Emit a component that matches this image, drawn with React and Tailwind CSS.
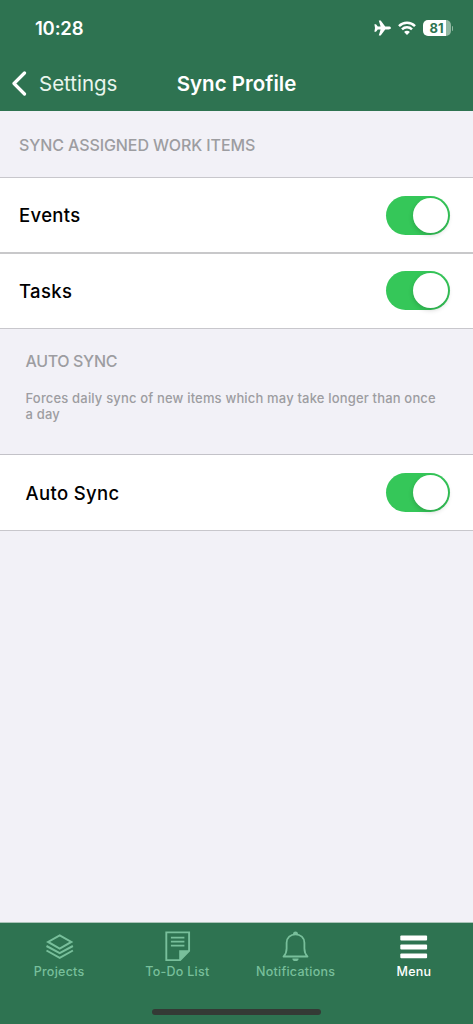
import React, { useState } from "react";

function StatusBar() {
  return (
    <div className="flex h-14 items-center justify-between pl-[35px] pr-5 text-white">
      <span className="text-[18.5px] leading-6 font-semibold tracking-[-0.2px]">10:28</span>
      <div className="flex items-center">
        <svg width="17" height="16" viewBox="0 0 17 16" fill="currentColor" aria-label="Airplane mode">
          <path d="M16.9 8c0 1-1.1 1.4-2.2 1.4h-3.5L6.7 15.5H4.8l1.8-6.1H3.8L2 11.7H.4L1 8 .4 4.3H2l1.8 2.3h2.8L4.8.5h1.9l4.5 6.1h3.5c1.1 0 2.2.4 2.2 1.4z" />
        </svg>
        <svg className="ml-[7px]" width="18" height="14" viewBox="0 0 18 14" fill="none" stroke="currentColor" strokeWidth="2.5" aria-label="Wi-Fi">
          <path d="M1 5.1a11.3 11.3 0 0 1 16 0" />
          <path d="M4 8.4a7.1 7.1 0 0 1 10 0" />
          <path d="M6.1 10.9a4 4 0 0 1 5.8 0L9 13.9z" fill="currentColor" stroke="none" />
        </svg>
        <div className="ml-[7px] flex h-4 w-7 items-center justify-center rounded-[5px] bg-linear-to-r from-white from-81% to-[#91b7a1] to-81% pt-px text-[13px] leading-none font-bold text-[#2e7351]">
          81
        </div>
        <span className="ml-px h-[5px] w-[1.5px] rounded-r-full bg-[#91b7a1]" />
      </div>
    </div>
  );
}

function NavBar() {
  return (
    <div className="grid h-[55px] grid-cols-[1fr_auto_1fr] items-center text-white">
      <button className="flex items-center pl-3 text-left">
        <svg width="15" height="25" viewBox="0 0 15 25" fill="none" stroke="currentColor" strokeWidth="3.2" strokeLinecap="round" strokeLinejoin="round">
          <path d="M12.5 2 2 12.5 12.5 23" />
        </svg>
        <span className="ml-3 text-[20.5px] leading-6 tracking-[-0.02px] text-[#e9f5ed]">Settings</span>
      </button>
      <h1 className="text-[20.5px] leading-6 font-semibold tracking-[0.02px]">Sync Profile</h1>
    </div>
  );
}

function Toggle({ label, checked, onChange }) {
  return (
    <button
      role="switch"
      aria-checked={checked}
      aria-label={label}
      onClick={() => onChange(!checked)}
      className={`flex h-[39px] w-16 items-center rounded-full p-0.5 ${
        checked ? "justify-end bg-[#35c759]" : "justify-start bg-[#e9e9ea]"
      }`}
    >
      <span className="size-[35px] rounded-full bg-white shadow-[0_2px_5px_rgba(0,0,0,0.18)]" />
    </button>
  );
}

function Row({ label, checked, onChange, className }) {
  return (
    <div className={`flex items-center justify-between bg-white pr-[23px] ${className}`}>
      <span className="text-[18.5px] leading-6 font-medium tracking-[0.35px] text-black">{label}</span>
      <Toggle label={label} checked={checked} onChange={onChange} />
    </div>
  );
}

function ProjectsIcon() {
  return (
    <svg width="30" height="30" viewBox="0 0 30 30" fill="none" stroke="currentColor" strokeWidth="2">
      <path d="M15.7 4.3 27.3 10.9 15.7 17.5 4.1 10.9z" />
      <path d="M2.5 15 15.7 22.2l13.2-7.2" />
      <path d="M2.5 19.5 15.7 26.9l13.2-7.4" />
    </svg>
  );
}

function TodoIcon() {
  return (
    <svg width="30" height="30" viewBox="0 0 30 30" fill="none" stroke="currentColor" strokeWidth="1.9">
      <path d="M4.3 1.4h22.8v18.4l-9 9.3H4.3z" />
      <path d="M17.2 19.2h10.4L17.2 29.8z" fill="currentColor" stroke="none" />
      <path d="M8.9 6.6h13.5M8.9 10.6h13.5M8.9 14.6h13.5" strokeWidth="1.6" />
    </svg>
  );
}

function BellIcon() {
  return (
    <svg width="30" height="30" viewBox="0 0 30 30" fill="none" stroke="currentColor" strokeWidth="1.8" strokeLinejoin="round">
      <path d="M14.5 3.3c-5 0-8.9 3.6-8.9 8.5v5.6c0 4.2-.8 5.6-3.1 8.1h24c-2.3-2.5-3.1-3.9-3.1-8.1v-5.6c0-4.9-3.9-8.5-8.9-8.5z" />
      <path d="M12 3.4a2.5 2.8 0 0 1 5 0zM11.4 27.4h6.2a3.1 2.6 0 0 1-6.2 0z" fill="currentColor" stroke="none" />
    </svg>
  );
}

function MenuIcon() {
  return (
    <svg width="30" height="30" viewBox="0 0 30 30" fill="currentColor">
      <rect x="1.3" y="4.6" width="26.8" height="5" rx="1" />
      <rect x="1.3" y="13.6" width="26.8" height="5" rx="1" />
      <rect x="1.3" y="22.6" width="26.8" height="4.6" rx="1" />
    </svg>
  );
}

const tabs = [
  { name: "Projects", Icon: ProjectsIcon },
  { name: "To-Do List", Icon: TodoIcon },
  { name: "Notifications", Icon: BellIcon },
  { name: "Menu", Icon: MenuIcon },
];

function TabBar({ active }) {
  return (
    <nav className="flex h-[102px] flex-col items-center border-t border-[#abc4b9] bg-[#2e7351]">
      <div className="grid w-full grid-cols-4 pt-2">
        {tabs.map(({ name, Icon }) => (
          <button
            key={name}
            className={`flex flex-col items-center ${name === active ? "text-white" : "text-[#78bf9b]"}`}
          >
            <Icon />
            <span className="mt-[3px] text-[12.5px] leading-4 font-medium tracking-[0.25px]">{name}</span>
          </button>
        ))}
      </div>
      <div className="mt-auto mb-[9px] h-1.5 w-[169px] rounded-full bg-[#343a35]" />
    </nav>
  );
}

export default function App() {
  const [events, setEvents] = useState(true);
  const [tasks, setTasks] = useState(true);
  const [autoSync, setAutoSync] = useState(true);

  return (
    <div className="flex h-screen flex-col bg-[#f2f1f7] font-[Inter,sans-serif]">
      <header className="h-[111px] shrink-0 bg-[#2e7351]">
        <StatusBar />
        <NavBar />
      </header>

      <main className="flex-1">
        <div className="flex h-[67px] items-center border-b border-[#c8c7cc] pt-0.5 pl-[19px]">
          <h2 className="text-base font-medium tracking-[-0.1px] text-[#9d9da1]">SYNC ASSIGNED WORK ITEMS</h2>
        </div>
        <Row label="Events" checked={events} onChange={setEvents} className="h-[76px] border-b-2 border-[#c8c8ca] pl-[19px]" />
        <Row label="Tasks" checked={tasks} onChange={setTasks} className="h-[75px] border-b border-[#c8c7cc] pb-px pl-[19px]" />

        <div className="h-[126px] border-b border-[#c3c2c8] pt-5 pl-[25.5px] text-[#9d9da1]">
          <h2 className="text-base font-medium tracking-[-0.35px]">AUTO SYNC</h2>
          <p className="mt-[17px] w-[420px] text-[13px] leading-4 font-medium tracking-[0.17px]">
            Forces daily sync of new items which may take longer than once a day
          </p>
        </div>
        <Row label="Auto Sync" checked={autoSync} onChange={setAutoSync} className="h-[76px] border-b border-[#c8c7cc] pl-[25.5px]" />
      </main>

      <TabBar active="Menu" />
    </div>
  );
}
